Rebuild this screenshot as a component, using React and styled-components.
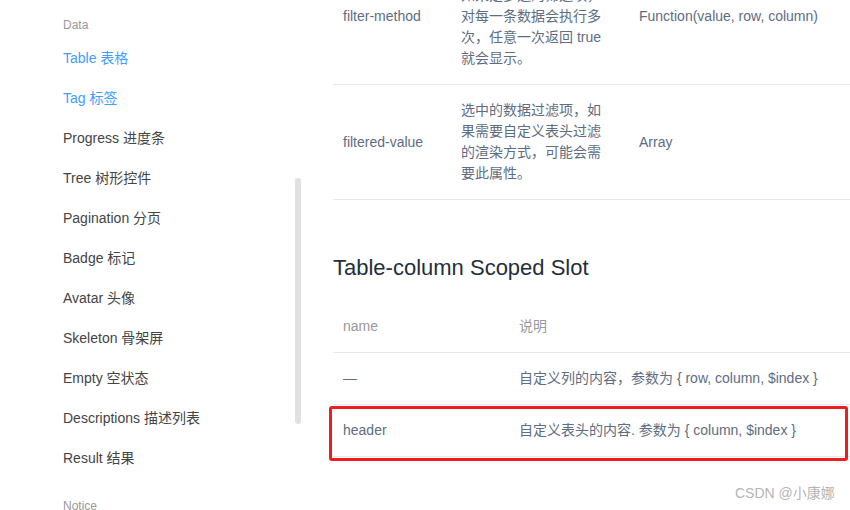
import React from "react";
import styled, { createGlobalStyle } from "styled-components";

const Global = createGlobalStyle`
  html, body { margin: 0; padding: 0; background: #fff; }
  body {
    width: 850px; height: 510px; overflow: hidden;
    font-family: "Liberation Sans", Arial, "Noto Sans CJK SC", sans-serif;
  }
  #root { height: 510px; }
`;

const Page = styled.div`
  position: relative;
  display: flex;
  width: 850px;
  height: 510px;
  overflow: hidden;
`;

const Sidebar = styled.nav`
  position: relative;
  flex: 0 0 300px;
  padding-left: 63px;
  box-sizing: border-box;
`;

const GroupLabel = styled.div`
  font-size: 12px;
  line-height: 18px;
  color: #999;
  margin-top: ${(p) => p.$top}px;
`;

const NavItem = styled.div`
  font-size: 14px;
  line-height: 20px;
  height: 40px;
  display: flex;
  align-items: center;
  color: ${(p) => (p.$active ? "#409eff" : "#444")};
`;

const NavList = styled.div`
  margin-top: ${(p) => p.$top}px;
  display: flex;
  flex-direction: column;
`;

const Thumb = styled.div`
  position: absolute;
  left: 295px;
  top: 178px;
  width: 6px;
  height: 246px;
  border-radius: 3px;
  background: #e1e1e1;
`;

const Main = styled.main`
  flex: 1;
  padding-left: 33px;
  margin-top: -51px;
  display: flex;
  flex-direction: column;
`;

const Table = styled.div`
  display: grid;
  grid-template-columns: ${(p) => p.$cols};
`;

const Row = styled.div`
  display: contents;
`;

const Cell = styled.div`
  padding: 15px 10px;
  border-bottom: 1px solid #e5e8f0;
  font-size: 14px;
  line-height: 21px;
  color: ${(p) => (p.$head ? "#999" : "#5e6d82")};
  display: flex;
  align-items: center;
`;

const Wrap = styled.div`
  width: 142px;
`;

const Heading = styled.h3`
  margin: 51px 0 17px;
  font-size: 22px;
  line-height: 33px;
  font-weight: 400;
  color: #1f2f3d;
`;

const Highlight = styled.div`
  position: absolute;
  left: 329px;
  top: 406px;
  width: 519px;
  height: 55px;
  box-sizing: border-box;
  border: 3px solid #f31c1c;
  border-radius: 3px;
`;

const Watermark = styled.div`
  position: absolute;
  left: 735px;
  top: 484px;
  font-size: 14px;
  line-height: 18px;
  color: #b5b5b5;
`;

const navItems = [
  ["Table 表格", true],
  ["Tag 标签", true],
  ["Progress 进度条"],
  ["Tree 树形控件"],
  ["Pagination 分页"],
  ["Badge 标记"],
  ["Avatar 头像"],
  ["Skeleton 骨架屏"],
  ["Empty 空状态"],
  ["Descriptions 描述列表"],
  ["Result 结果"],
];

const attrRows = [
  [
    "filter-method",
    "数据过滤使用的方法，如果是多选的筛选项，对每一条数据会执行多次，任意一次返回 true 就会显示。",
    "Function(value, row, column)",
  ],
  [
    "filtered-value",
    "选中的数据过滤项，如果需要自定义表头过滤的渲染方式，可能会需要此属性。",
    "Array",
  ],
];

const slotRows = [
  ["—", "自定义列的内容，参数为 { row, column, $index }"],
  ["header", "自定义表头的内容. 参数为 { column, $index }"],
];

export default function App() {
  return (
    <Page>
      <Global />
      <Sidebar>
        <GroupLabel $top={16}>Data</GroupLabel>
        <NavList $top={4}>
          {navItems.map(([t, a]) => (
            <NavItem key={t} $active={a}>
              {t}
            </NavItem>
          ))}
        </NavList>
        <GroupLabel $top={19}>Notice</GroupLabel>
        <Thumb />
      </Sidebar>
      <Main>
        <Table $cols="118px 178px 1fr">
          {attrRows.map(([a, b, c]) => (
            <Row key={a}>
              <Cell>{a}</Cell>
              <Cell>
                <Wrap>{b}</Wrap>
              </Cell>
              <Cell>{c}</Cell>
            </Row>
          ))}
        </Table>
        <Heading>Table-column Scoped Slot</Heading>
        <Table $cols="176px 1fr">
          <Row>
            <Cell $head>name</Cell>
            <Cell $head>说明</Cell>
          </Row>
          {slotRows.map(([a, b]) => (
            <Row key={a}>
              <Cell>{a}</Cell>
              <Cell>{b}</Cell>
            </Row>
          ))}
        </Table>
      </Main>
      <Highlight />
      <Watermark>CSDN @小康娜</Watermark>
    </Page>
  );
}
